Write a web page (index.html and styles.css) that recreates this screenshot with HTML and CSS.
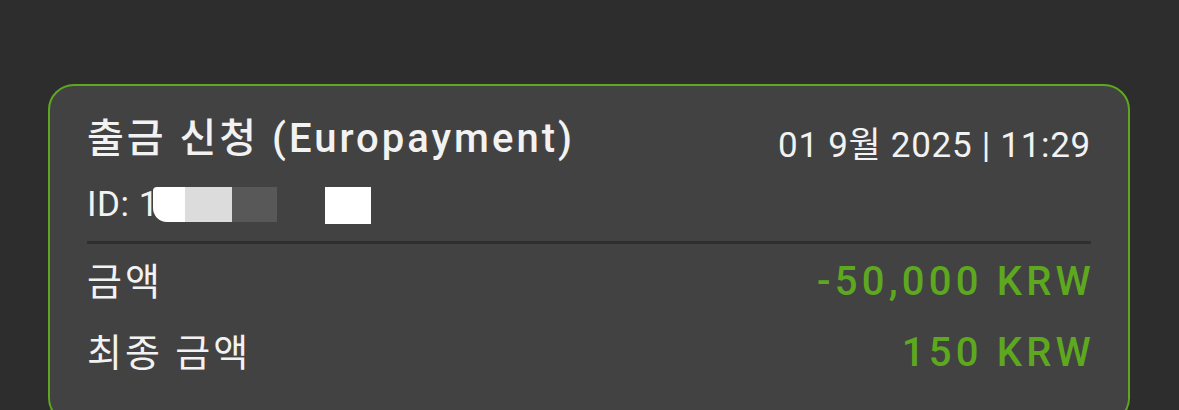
FILE: index.html
```html
<!DOCTYPE html>
<html lang="ko">
<head>
  <meta charset="UTF-8">
  <meta name="viewport" content="width=device-width, initial-scale=1.0">
  <title>출금 내역</title>
  <link rel="stylesheet" href="styles.css">
</head>
<body>
  <!-- Withdrawal card -->
  <div class="tx-card">
    <div class="tx-head">
      <div class="tx-title">출금 신청 (Europayment)</div>
      <div class="tx-date">01 9월 2025 | 11:29</div>
    </div>
    <div class="tx-id">
      <span class="tx-id-text">ID: 1</span><span class="mask mask-white"></span><span class="mask mask-light"></span><span class="mask mask-mid"></span><span class="mask mask-gap"></span><span class="mask mask-box"></span>
    </div>
    <div class="tx-divider"></div>
    <div class="tx-row first">
      <span class="tx-label">금액</span>
      <span class="tx-value">-50,000 KRW</span>
    </div>
    <div class="tx-row">
      <span class="tx-label">최종 금액</span>
      <span class="tx-value">150 KRW</span>
    </div>
  </div>
</body>
</html>
```
FILE: styles.css
```css
body {
  margin: 0;
  padding: 84px 49px 0 48px;
  height: 410px;
  box-sizing: border-box;
  overflow: hidden;
  background-color: #2d2d2d;
  font-family: Roboto, "Noto Sans CJK KR", sans-serif;
  color: #f2f2f2;
}
.tx-card {
  height: 340px;
  box-sizing: border-box;
  border: 2px solid #5ea81f;
  border-radius: 26px;
  background-color: #424242;
  padding: 33px 37px 0 37px;
}
.tx-head {
  display: flex;
  justify-content: space-between;
  align-items: flex-start;
  height: 40px;
}
.tx-title {
  font-size: 40px;
  line-height: 40px;
  font-weight: 500;
  letter-spacing: 3px;
}
.tx-date {
  font-size: 35px;
  line-height: 40px;
  letter-spacing: 0.7px;
  margin-top: 7px;
}
.tx-id {
  display: flex;
  align-items: flex-start;
  height: 40px;
  margin-top: 26px;
}
.tx-id-text {
  font-size: 35px;
  line-height: 40px;
  letter-spacing: 0.5px;
}
.mask {
  display: block;
  height: 35px;
  margin-top: 2px;
}
.mask-white {
  width: 32px;
  margin-left: -6px;
  background-color: #fff;
  border-radius: 4px 0 0 14px;
}
.mask-light {
  width: 47px;
  background-color: #dcdcdc;
}
.mask-mid {
  width: 45px;
  background-color: #585858;
}
.mask-gap {
  width: 48px;
}
.mask-box {
  width: 46px;
  height: 37px;
  background-color: #fff;
}
.tx-divider {
  height: 3px;
  background-color: #2f2f2f;
  margin-top: 16px;
}
.tx-row {
  display: flex;
  justify-content: space-between;
  align-items: baseline;
  height: 71px;
  line-height: 70px;
}
.tx-row.first {
  margin-top: 3px;
}
.tx-label {
  font-size: 38px;
  letter-spacing: 3px;
}
.tx-value {
  font-size: 40px;
  font-weight: 500;
  letter-spacing: 4.2px;
  color: #5ea81f;
  margin-right: -4px;
}
```
